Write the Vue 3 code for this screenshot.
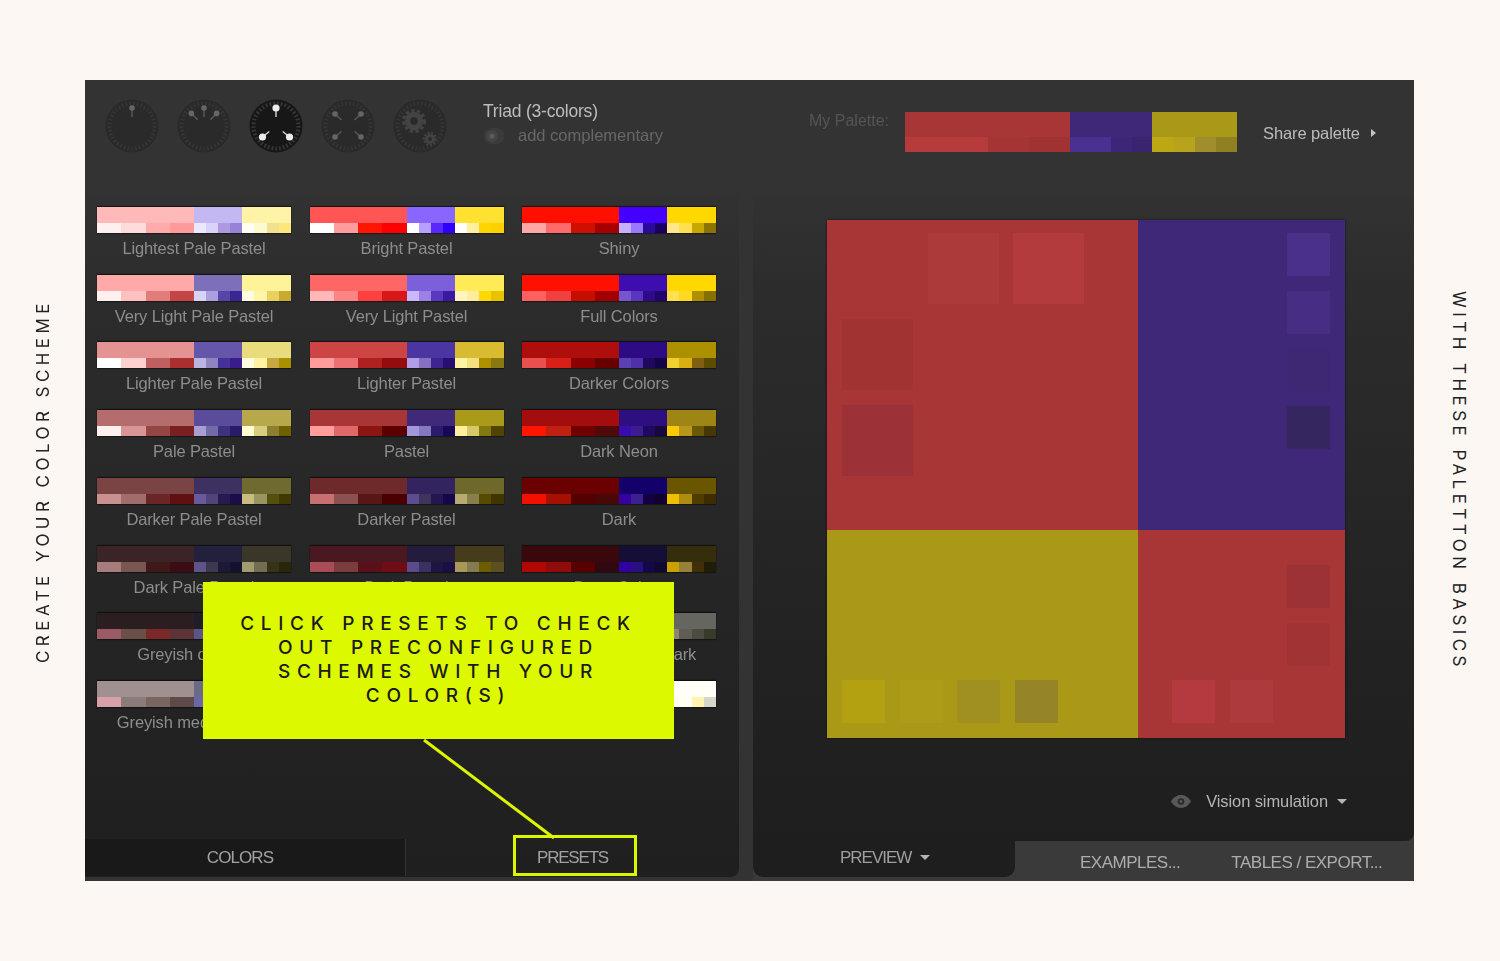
<script setup>
const presets = [
  { name: 'Lightest Pale Pastel', main: ['#ffb9b9', '#c4b8f2', '#fff3a8'], small: ['#fff0f0', '#ffdcdc', '#ffabab', '#ff9a9a', '#ece8ff', '#d9d3fb', '#ab9ae0', '#9682d8', '#fffdf0', '#fff9d0', '#f0e090', '#fbe878'] },
  { name: 'Bright Pastel', main: ['#ff5555', '#8866ff', '#ffe130'], small: ['#ffffff', '#ff9d9d', '#ff1500', '#ff0000', '#ffffff', '#b8a0ff', '#5a28ff', '#3000ff', '#ffffff', '#ffefa0', '#ffd500', '#ffd000'] },
  { name: 'Shiny', main: ['#ff0f00', '#4400ff', '#ffd800'], small: ['#ffa8a8', '#ff6a6a', '#cf0f00', '#a80000', '#c4b0ff', '#9a78ff', '#2a0a9c', '#1a0060', '#ffe88a', '#ffe050', '#c8a800', '#8c7400'] },
  { name: 'Very Light Pale Pastel', main: ['#ffa9a9', '#7e6fbb', '#fff39a'], small: ['#fff0f0', '#ffc0c0', '#e47b7b', '#c34545', '#d8d2f4', '#ac9fe0', '#5845a8', '#3b2592', '#fffbe0', '#fff4a8', '#ead060', '#c8aa30'] },
  { name: 'Very Light Pastel', main: ['#ff6666', '#7c5fdb', '#ffeb55'], small: ['#ffb8b8', '#ff8585', '#ff4040', '#d81818', '#c8b8ff', '#9c80e8', '#5a38c0', '#3a18a0', '#fff4c0', '#ffeca0', '#ffd800', '#e8c400'] },
  { name: 'Full Colors', main: ['#ff1000', '#3d0db0', '#ffd800'], small: ['#ff6060', '#f04040', '#c40f00', '#a00000', '#7755cc', '#5a35c0', '#2e0a88', '#20066a', '#ffe050', '#ffd820', '#b09000', '#857000'] },
  { name: 'Lighter Pale Pastel', main: ['#e59292', '#6556aa', '#e8dc7c'], small: ['#ffffff', '#ffd0d0', '#c05f5f', '#ab2f2f', '#bcb4e0', '#8f84c0', '#46309a', '#3a1c8c', '#fffbe0', '#fff2a0', '#c8a840', '#a89000'] },
  { name: 'Lighter Pastel', main: ['#cc4444', '#4b35a0', '#d8bb30'], small: ['#ff9c9c', '#ee7070', '#b02020', '#940c0c', '#b09ee8', '#8870c0', '#3c2590', '#280e70', '#fff5a0', '#f5e080', '#b09000', '#8a7810'] },
  { name: 'Darker Colors', main: ['#af0f0c', '#2d0b85', '#ad9000'], small: ['#e85050', '#d82018', '#8b0000', '#680000', '#5a40b0', '#5030a8', '#20085c', '#150348', '#f0d030', '#d8b010', '#806010', '#5c4c00'] },
  { name: 'Pale Pastel', main: ['#b56c6c', '#5b4c9b', '#b8a84c'], small: ['#fff0f0', '#d99595', '#964545', '#7a2020', '#a69fd0', '#736aa8', '#3f3080', '#2a1a68', '#fffbd0', '#d8cc80', '#8c8030', '#6e6200'] },
  { name: 'Pastel', main: ['#a83636', '#41297a', '#a99a1a'], small: ['#ff9c9c', '#e06868', '#8b1510', '#5a0000', '#a098d8', '#8478c0', '#2c1a6c', '#180858', '#fff0a0', '#d8c868', '#857810', '#504400'] },
  { name: 'Dark Neon', main: ['#a30d0d', '#2e0f80', '#9f8514'], small: ['#ff1500', '#c02010', '#700000', '#500808', '#3a0cb0', '#3c1c90', '#1e0a60', '#140a40', '#f8cc00', '#b89818', '#6a5808', '#483800'] },
  { name: 'Darker Pale Pastel', main: ['#7a4444', '#3c3160', '#6f6a30'], small: ['#c99090', '#a06c6c', '#6a2626', '#601010', '#6a5a9c', '#50447c', '#261a50', '#1a0e4a', '#c8bc80', '#9a9460', '#54500c', '#403a00'] },
  { name: 'Darker Pastel', main: ['#6e2a2a', '#332460', '#6e682a'], small: ['#c87070', '#8c5050', '#581616', '#4a0000', '#5c4c90', '#40345c', '#241650', '#14084c', '#b8aa70', '#88804c', '#584a00', '#403400'] },
  { name: 'Dark', main: ['#6b0000', '#14006a', '#6a5500'], small: ['#f21000', '#a51000', '#520000', '#480808', '#3700a0', '#3a2090', '#120040', '#120030', '#f0c000', '#b08c10', '#503c00', '#3c2c00'] },
  { name: 'Dark Pale Pastel', main: ['#3a2426', '#22203c', '#3a3728'], small: ['#a67c7c', '#7a5650', '#401818', '#3a0c14', '#5d5588', '#3c3850', '#1c1838', '#141030', '#a09c70', '#746e50', '#363218', '#2a2608'] },
  { name: 'Dark Pastel', main: ['#4a1820', '#231c3c', '#463c1c'], small: ['#a84c58', '#7a3c3c', '#5a1018', '#700c14', '#5a4c8c', '#3c3060', '#201444', '#1a0e44', '#a89858', '#847c50', '#6e5c00', '#5a5020'] },
  { name: 'Deep Colors', main: ['#3a080c', '#150f38', '#352e0c'], small: ['#b00800', '#900c0c', '#580000', '#300810', '#3000a0', '#281080', '#140848', '#100830', '#c8a000', '#988038', '#403008', '#201c08'] },
  { name: 'Greyish darkest', main: ['#2a1e20', '#1f1e28', '#2a2a20'], small: ['#9a5a66', '#6a5048', '#7a2828', '#5c3438', '#5a5488', '#403c58', '#24203c', '#1c1830', '#8a8660', '#646048', '#403c20', '#302c14'] },
  { name: '', main: ['#3c3236', '#302e3c', '#3a3830'], small: ['#a07078', '#786460', '#503838', '#443034', '#6a6488', '#504c60', '#343044', '#2a263c', '#908c70', '#6c6850', '#444028', '#38341c'] },
  { name: 'Greyish medium dark', main: ['#4a4442', '#44424c', '#666660'], small: ['#8a7070', '#6a5c5a', '#4a3c3c', '#3c3030', '#6a6a80', '#56566a', '#3c3c4a', '#30303c', '#8a8672', '#605e54', '#4c4c40', '#3a3a28'] },
  { name: 'Greyish medium dark', main: ['#a09090', '#6a6a88', '#8a8870'], small: ['#d8a0a8', '#8a7c78', '#7a6660', '#5e4a48', '#6a66a8', '#6c6a80', '#4a4a5c', '#3c3c4c', '#b0ac88', '#908c70', '#6a6648', '#5a563c'] },
  { name: '', main: ['#c0b0b0', '#9090a8', '#b0ae90'], small: ['#e8c0c0', '#c0a8a8', '#987c7c', '#806868', '#a8a4c8', '#8c8ca8', '#6c6c84', '#5c5c70', '#d0cca8', '#b0ac88', '#8c8868', '#7a7658'] },
  { name: 'Almost white', dim: true, main: ['#e8d8d8', '#c8c8e0', '#fffff8'], small: ['#ffe0e0', '#e8d0d0', '#c8a8a8', '#a89090', '#d0d0f0', '#b8b8d8', '#9090b0', '#787898', '#fffbe8', '#fffff4', '#fff4b0', '#d6d6c8'] },
]

const dials = [
  { dots: [[0, -18]], active: false },
  { dots: [[-12.6, -12.6], [0, -18], [12.6, -12.6]], active: false },
  { dots: [[0, -18], [-13.5, 11], [13.5, 11]], active: true },
  { dots: [[-13, -12], [13, -12], [-13, 11], [13, 11]], active: false },
  { dots: [], active: false, gears: true },
]

const previewRegions = [
  { cls: 'tl', bg: '#a93636', cells: [null, '#ad3a3b', '#b33b3e', '#a13333', null, null, '#9c3237', null, null] },
  { cls: 'tr', bg: '#402878', cells: ['#4a3088', '#472e84', '#3d2874', '#36265f'] },
  { cls: 'bl', bg: '#a99916', cells: ['#b3a112', '#ac9c18', '#a09020', '#958526'] },
  { cls: 'br', bg: '#a93636', cells: [null, null, '#9c3236', null, null, '#a13334', '#b53a40', '#ad3a3c', null] },
]

const myPalette = [
  { w: 165, bg: '#a93636', small: ['#b53c3a', '#b53c3a', '#a53434', '#a03232'] },
  { w: 82, bg: '#402878', small: ['#4a3090', '#4a3090', '#3c2678', '#3a2470'] },
  { w: 85, bg: '#a99916', small: ['#bda814', '#b8a41c', '#a08e2c', '#908024'] },
]

function segments(p, i) {
  return p.small.slice(i * 4, i * 4 + 4)
}
</script>

<template>
  <div class="page">
    <aside class="side">
      <span class="side-text up">CREATE YOUR COLOR SCHEME</span>
    </aside>

    <div class="stage">
      <div class="app">
        <header class="head">
          <div class="dials">
            <svg v-for="(d, i) in dials" :key="i" class="dial" viewBox="-27 -27 54 54" width="54" height="54">
              <circle r="26.5" :fill="d.active ? '#171717' : '#2a2a2a'" />
              <circle r="22.5" fill="none" :stroke="d.active ? '#383838' : '#353535'" stroke-width="4" stroke-dasharray="1.6 2.2" />
              <g v-for="(pt, k) in d.dots" :key="k">
                <line :x1="pt[0]" :y1="pt[1]" :x2="pt[0] * 0.5" :y2="pt[1] * 0.5" :stroke="d.active ? '#d8d8d8' : '#5a5a5a'" stroke-width="1.4" />
                <circle :cx="pt[0]" :cy="pt[1]" :r="d.active ? 3.6 : 2.8" :fill="d.active ? '#ececec' : '#666'" />
              </g>
              <g v-if="d.gears" fill="none" stroke="#434343">
                <circle cx="-6" cy="-5" r="6.5" stroke-width="5.5" />
                <circle cx="-6" cy="-5" r="10.5" stroke-width="3" stroke-dasharray="3.4 2.4" />
                <circle cx="10" cy="13" r="3.5" stroke-width="3" />
                <circle cx="10" cy="13" r="6" stroke-width="2" stroke-dasharray="2 1.6" />
              </g>
            </svg>
          </div>
          <div class="scheme">
            <div class="scheme-title">Triad (3-colors)</div>
            <div class="scheme-opt">
              <svg class="toggle" viewBox="0 0 22 18" width="22" height="18">
                <rect x="0.5" y="1" width="21" height="16" rx="8" fill="#3b3b3b" />
                <circle cx="9" cy="9" r="6" fill="#444" />
                <circle cx="9" cy="9" r="2.6" fill="#5a5a5a" />
              </svg>
              <span>add complementary</span>
            </div>
          </div>
          <div class="palette-label">My Palette:</div>
          <div class="palette">
            <div v-for="(c, i) in myPalette" :key="i" class="pal-col" :style="{ width: c.w + 'px', background: c.bg }">
              <div class="pal-small">
                <i v-for="(s, k) in c.small" :key="k" :style="{ background: s }"></i>
              </div>
            </div>
          </div>
          <div class="share">Share palette<span class="tri-right"></span></div>
        </header>

        <div class="main">
          <section class="left">
            <div class="grid">
              <div v-for="(p, n) in presets" :key="n" class="preset">
                <div class="swatch">
                  <div v-for="(m, i) in p.main" :key="i" class="sw-col" :class="'c' + i">
                    <div class="sw-main" :style="{ background: m }"></div>
                    <div class="sw-small">
                      <i v-for="(s, k) in segments(p, i)" :key="k" :style="{ background: s }"></i>
                    </div>
                  </div>
                </div>
                <div v-if="p.name" class="preset-name">{{ p.name }}</div>
              </div>
            </div>
            <div class="left-tabs">
              <div class="tab colors">COLORS</div>
              <div class="tab presets-tab">PRESETS</div>
            </div>
          </section>

          <div class="gutter"></div>

          <section class="right">
            <div class="right-body">
              <div class="preview">
                <div v-for="r in previewRegions" :key="r.cls" class="region" :class="r.cls" :style="{ background: r.bg }">
                  <i v-for="(c, k) in r.cells" :key="k" :style="{ background: c || 'transparent' }"></i>
                </div>
              </div>
              <div class="vision">
                <svg viewBox="0 0 24 16" width="22" height="15">
                  <path d="M1 8 C5 2 9 1 12 1 C15 1 19 2 23 8 C19 14 15 15 12 15 C9 15 5 14 1 8 Z" fill="#585858" />
                  <circle cx="12" cy="8" r="3.6" fill="#2a2a2a" />
                  <circle cx="12" cy="8" r="1.6" fill="#585858" />
                </svg>
                <span>Vision simulation</span>
                <b class="tri-down"></b>
              </div>
            </div>
            <div class="right-tabs">
              <div class="preview-tab">PREVIEW<b class="tri-down"></b></div>
              <div class="other-tabs">
                <span>EXAMPLES...</span>
                <span>TABLES / EXPORT...</span>
              </div>
            </div>
          </section>
        </div>
      </div>

      <svg class="pointer" viewBox="0 0 140 110" width="140" height="110">
        <line x1="2" y1="2" x2="132" y2="100" stroke="#dcf500" stroke-width="3" />
      </svg>
      <div class="callout">CLICK PRESETS TO CHECK OUT PRECONFIGURED SCHEMES WITH YOUR COLOR(S)</div>
      <div class="highlight"></div>
    </div>

    <aside class="side">
      <span class="side-text down">WITH THESE PALETTON BASICS</span>
    </aside>
  </div>
</template>

<style>
html, body { margin: 0; background: #fcf7f3; }
</style>

<style scoped>
.page {
  display: flex;
  width: 1500px;
  height: 961px;
  padding-top: 80px;
  box-sizing: border-box;
  background: #fcf7f3;
  overflow: hidden;
}
.side {
  width: 85px;
  height: 801px;
  display: flex;
  align-items: center;
  justify-content: center;
  flex: none;
}
.side + .stage + .side { width: 86px; }
.side-text {
  writing-mode: vertical-rl;
  font-family: Inter, "Noto Sans", sans-serif;
  font-size: 17px;
  letter-spacing: 4.45px;
  color: #222;
  white-space: nowrap;
}
.side-text.up { transform: rotate(180deg); }
.side-text.down { position: relative; left: 2px; }

.stage { position: relative; width: 1329px; height: 801px; flex: none; }
.app {
  width: 1329px;
  height: 801px;
  display: flex;
  flex-direction: column;
  background: #333;
  font-family: "Liberation Sans", Arial, sans-serif;
  filter: blur(0.55px);
}
.head {
  height: 115px;
  flex: none;
  display: flex;
  align-items: flex-start;
  background: #333;
  box-sizing: border-box;
  padding: 19px 0 0 20px;
}
.dials { display: flex; gap: 18px; }
.dial { display: block; filter: blur(0.4px); }
.scheme { margin-left: 36px; width: 326px; margin-top: 2px; }
.scheme-title { font-size: 17.5px; line-height: 20px; letter-spacing: -0.2px; color: #bdbdbd; }
.scheme-opt {
  display: flex;
  align-items: center;
  gap: 13px;
  margin-top: 5px;
  font-size: 16.5px;
  letter-spacing: 0;
  color: #676767;
}
.palette-label { margin-top: 12px; font-size: 16px; line-height: 20px; letter-spacing: 0; color: #555; width: 96px; }
.palette { display: flex; margin-top: 13px; height: 40px; }
.pal-col { display: flex; flex-direction: column; justify-content: flex-end; }
.pal-small { display: flex; height: 15px; }
.pal-small i { flex: 1; display: block; }
.share {
  display: flex;
  align-items: center;
  margin-left: 26px;
  margin-top: 24px;
  font-size: 16.5px;
  line-height: 20px;
  letter-spacing: -0.1px;
  color: #bcbcbc;
}
.tri-right {
  margin-left: 11px;
  border-left: 5px solid #c4c4c4;
  border-top: 4px solid transparent;
  border-bottom: 4px solid transparent;
}

.main { flex: 1; display: flex; min-height: 0; }
.left {
  width: 654px;
  flex: none;
  display: flex;
  flex-direction: column;
  background: linear-gradient(#323232 0, #2c2c2c 15%, #252525 60%, #1f1f1f 100%);
  border-bottom-right-radius: 8px;
  height: 682px;
}
.grid {
  display: grid;
  grid-template-columns: repeat(3, 194px);
  grid-auto-rows: 67.72px;
  column-gap: 18.5px;
  padding: 12px 0 0 12px;
  height: 633px;
  box-sizing: border-box;
}
.preset { display: flex; flex-direction: column; align-items: center; min-width: 0; }
.swatch {
  display: flex;
  width: 100%;
  height: 26px;
  flex: none;
  box-shadow: 0 -1px 1px rgba(0, 0, 0, 0.55), 0 1px 1px rgba(0, 0, 0, 0.4);
}
.sw-col { display: flex; flex-direction: column; }
.sw-col.c0 { width: 97px; }
.sw-col.c1 { width: 48px; }
.sw-col.c2 { width: 49px; }
.sw-main { height: 16px; }
.sw-small { display: flex; height: 10px; }
.sw-small i { flex: 1; display: block; }
.preset-name {
  margin-top: 5px;
  font-size: 16.5px;
  line-height: 20px;
  letter-spacing: -0.13px;
  color: #8d8d8d;
  white-space: nowrap;
}
.left-tabs { display: flex; height: 37px; margin-top: auto; flex: none; transform: translateY(-1px); }
.tab {
  font-size: 17px;
  letter-spacing: -0.9px;
  color: #a2a2a2;
  display: flex;
  align-items: center;
  justify-content: center;
}
.tab.colors { width: 321px; background: #191919; border-right: 1px solid #333; padding-right: 10px; box-sizing: border-box; }
.tab.presets-tab { flex: 1; letter-spacing: -1.2px; }

.gutter { width: 14px; flex: none; background: #333; }

.right { flex: 1; display: flex; flex-direction: column; background: #3a3a3a; }
.right-body {
  height: 646px;
  flex: none;
  box-sizing: border-box;
  padding: 25px 0 0 74px;
  background: linear-gradient(#323232 0, #2c2c2c 15%, #232323 65%, #1e1e1e 100%);
  border-bottom-right-radius: 8px;
}
.preview {
  display: grid;
  grid-template-columns: 311px 207px;
  grid-template-rows: 310px 208px;
  width: 518px;
  box-shadow: 0 0 2px rgba(0, 0, 0, 0.7);
}
.region { display: grid; box-sizing: border-box; }
.region i { display: block; }
.region.tl {
  grid-template-columns: repeat(3, 71px);
  grid-template-rows: 71px 71px 71px;
  gap: 15px 14.5px;
  padding: 13px 15px;
}
.region.tr {
  grid-template-columns: 43px;
  grid-auto-rows: 43px;
  row-gap: 14.5px;
  justify-content: end;
  padding: 13px 15px;
}
.region.bl {
  grid-template-columns: repeat(4, 43px);
  grid-template-rows: 43px;
  column-gap: 14.5px;
  align-content: end;
  padding: 0 15px 15px;
}
.region.br {
  grid-template-columns: repeat(3, 43px);
  grid-template-rows: repeat(3, 43px);
  gap: 14.5px;
  justify-content: end;
  align-content: end;
  padding: 0 15px 15px 0;
}
.vision {
  display: flex;
  align-items: center;
  justify-content: flex-end;
  margin-top: 53px;
  padding-right: 67px;
  height: 20px;
  font-size: 16.5px;
  letter-spacing: -0.1px;
  color: #b5b5b5;
}
.vision span { margin-left: 14px; }
.tri-down {
  display: block;
  margin-left: 9px;
  border-top: 5px solid #b5b5b5;
  border-left: 5px solid transparent;
  border-right: 5px solid transparent;
}
.right-tabs { flex: 1; display: flex; }
.preview-tab {
  width: 262px;
  height: 36px;
  background: #1e1e1e;
  border-radius: 0 0 10px 10px;
  display: flex;
  align-items: center;
  padding: 0 0 3px 87px;
  box-sizing: border-box;
  font-size: 17px;
  letter-spacing: -1px;
  color: #9f9f9f;
}
.other-tabs {
  flex: 1;
  display: flex;
  padding: 12px 0 0 65px;
  gap: 51px;
  font-size: 17px;
  letter-spacing: -0.5px;
  color: #adadad;
  white-space: nowrap;
  line-height: 20px;
}

.pointer { position: absolute; left: 337px; top: 658px; pointer-events: none; }
.callout {
  position: absolute;
  left: 118px;
  top: 502px;
  width: 471px;
  height: 157px;
  box-sizing: border-box;
  padding: 30px 28px 0;
  background: #ddf900;
  color: #1a1a1a;
  font-family: Inter, "Noto Sans", sans-serif;
  font-size: 19px;
  font-weight: 500;
  line-height: 24px;
  letter-spacing: 6.7px;
  text-align: center;
}
.highlight {
  position: absolute;
  left: 428px;
  top: 755px;
  width: 124px;
  height: 41px;
  box-sizing: border-box;
  border: 3px solid #dcf500;
}
</style>
